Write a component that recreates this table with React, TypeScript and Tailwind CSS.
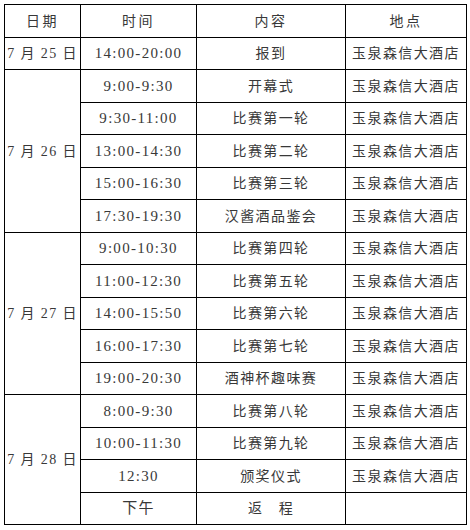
import React from "react";

type Row = { date?: string; span?: number; time: string; content: string; place: string };

const P = "玉泉森信大酒店";
const rows: Row[] = [
  { date: "7 月 25 日", span: 1, time: "14:00-20:00", content: "报到", place: P },
  { date: "7 月 26 日", span: 5, time: "9:00-9:30", content: "开幕式", place: P },
  { time: "9:30-11:00", content: "比赛第一轮", place: P },
  { time: "13:00-14:30", content: "比赛第二轮", place: P },
  { time: "15:00-16:30", content: "比赛第三轮", place: P },
  { time: "17:30-19:30", content: "汉酱酒品鉴会", place: P },
  { date: "7 月 27 日", span: 5, time: "9:00-10:30", content: "比赛第四轮", place: P },
  { time: "11:00-12:30", content: "比赛第五轮", place: P },
  { time: "14:00-15:50", content: "比赛第六轮", place: P },
  { time: "16:00-17:30", content: "比赛第七轮", place: P },
  { time: "19:00-20:30", content: "酒神杯趣味赛", place: P },
  { date: "7 月 28 日", span: 4, time: "8:00-9:30", content: "比赛第八轮", place: P },
  { time: "10:00-11:30", content: "比赛第九轮", place: P },
  { time: "12:30", content: "颁奖仪式", place: P },
  { time: "下午", content: "返　程", place: "" },
];

const cell = "border border-black text-center align-middle p-0";

export default function App() {
  return (
    <div
      className="w-[470px] h-[530px] bg-white pt-[4px] pl-[4px] text-[14px] text-[#383838] tracking-[1.4px]"
      style={{ fontFamily: '"Liberation Serif", "Noto Sans CJK SC", serif' }}
    >
      <table className="border-collapse table-fixed w-[462px]">
        <colgroup>
          <col className="w-[76px]" />
          <col className="w-[116px]" />
          <col className="w-[149px]" />
          <col className="w-[121px]" />
        </colgroup>
        <tbody>
          <tr className="h-[33px]">
            <td className={cell + " tracking-[2.5px]"}>日期</td>
            <td className={cell + " tracking-[2.5px]"}>时间</td>
            <td className={cell + " tracking-[2.5px]"}>内容</td>
            <td className={cell + " tracking-[2.5px]"}>地点</td>
          </tr>
          {rows.map((r, i) => (
            <tr key={i} className={i % 2 === 0 ? "h-[32px]" : "h-[33px]"}>
              {r.date && (
                <td className={cell} rowSpan={r.span}>
                  {r.date}
                </td>
              )}
              <td className={cell + " text-[15px] tracking-[1.3px]"}>{r.time}</td>
              <td className={cell}>{r.content}</td>
              <td className={cell}>{r.place}</td>
            </tr>
          ))}
        </tbody>
      </table>
    </div>
  );
}
